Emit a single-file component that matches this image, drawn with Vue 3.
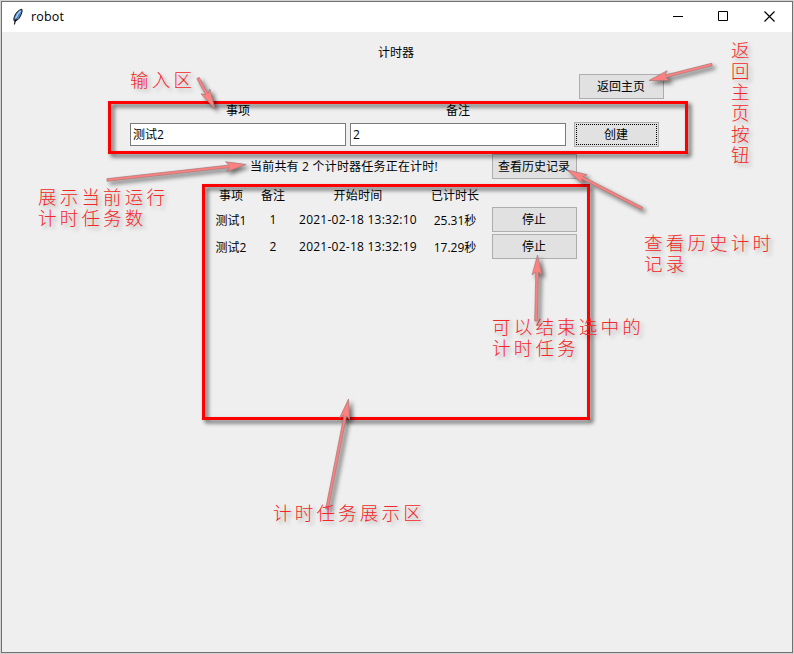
<script setup>
const tasks = [
  { name: '测试1', note: '1', start: '2021-02-18 13:32:10', elapsed: '25.31秒' },
  { name: '测试2', note: '2', start: '2021-02-18 13:32:19', elapsed: '17.29秒' },
]

const arrowShape = (x1, y1, x2, y2) => {
  const len = Math.hypot(x2 - x1, y2 - y1)
  const angle = (Math.atan2(y2 - y1, x2 - x1) * 180) / Math.PI
  return {
    points: `0,0 -20,-5 -17,-1.3 ${-len},-1.3 ${-len},1.3 -17,1.3 -20,5`,
    transform: `translate(${x2} ${y2}) rotate(${angle})`,
  }
}

const arrows = [
  arrowShape(198, 78, 215, 109),
  arrowShape(712, 64.5, 649, 80.5),
  arrowShape(107, 180, 246, 164.5),
  arrowShape(642, 208.5, 567, 170),
  arrowShape(536, 321, 537.5, 255),
  arrowShape(327, 509, 348.5, 399),
]
</script>

<template>
  <div class="screen">
    <div class="window">
      <header class="titlebar">
        <svg class="feather" width="12" height="18" viewBox="0 0 12 18">
          <path d="M9.8 1.2C6.5 2 3.6 5 2.5 8.3C1.8 10.3 1.6 12 2.4 13.2C4.7 13 7 11 8.2 8.6C9.4 6.2 10.6 3.4 9.8 1.2Z" fill="#4c85c5" stroke="#111" stroke-width="1" />
          <path d="M8.6 2.8C6.3 5 4.4 8 3.4 11" fill="none" stroke="#a9d0f5" stroke-width="1.4" />
          <path d="M4.4 10.5C3.4 12.5 2.8 14 2.4 16.5" fill="none" stroke="#111" stroke-width="1.2" />
        </svg>
        <span class="name">robot</span>
        <svg class="control" width="46" height="30" viewBox="0 0 46 30"><path d="M18 14.5H28" /></svg>
        <svg class="control" width="46" height="30" viewBox="0 0 46 30"><path d="M17.5 9.5H26.5V18.5H17.5Z" /></svg>
        <svg class="control" width="46" height="30" viewBox="0 0 46 30"><path d="M17.5 9.5L27.5 19.5M27.5 9.5L17.5 19.5" /></svg>
      </header>

      <main class="body">
        <h1 class="title">计时器</h1>
        <div class="home-row"><button class="btn">返回主页</button></div>

        <div class="form">
          <label class="field">
            <span class="label">事项</span>
            <input class="entry" value="测试2" />
          </label>
          <label class="field">
            <span class="label">备注</span>
            <input class="entry" value="2" />
          </label>
          <button class="btn create"><span class="focus">创建</span></button>
        </div>

        <div class="status-row">
          <span class="status">当前共有 2 个计时器任务正在计时!</span>
          <button class="btn">查看历史记录</button>
        </div>

        <div class="table">
          <div class="row head">
            <span>事项</span><span>备注</span><span>开始时间</span><span>已计时长</span>
          </div>
          <div v-for="t in tasks" :key="t.name" class="row">
            <span>{{ t.name }}</span><span>{{ t.note }}</span><span>{{ t.start }}</span><span>{{ t.elapsed }}</span>
            <button class="btn">停止</button>
          </div>
        </div>
      </main>
    </div>

    <div class="frame input-frame"></div>
    <div class="frame list-frame"></div>
    <svg class="arrows" width="794" height="654" viewBox="0 0 794 654">
      <g v-for="(a, i) in arrows" :key="i" class="arrow">
        <polygon :points="a.points" :transform="a.transform" />
      </g>
    </svg>
    <p class="note note-input">输入区</p>
    <p class="note note-home">返回主页按钮</p>
    <p class="note note-count">展示当前运行<br />计时任务数</p>
    <p class="note note-history">查看历史计时<br />记录</p>
    <p class="note note-stop">可以结束选中的<br />计时任务</p>
    <p class="note note-list">计时任务展示区</p>
  </div>
</template>

<style>
body {
  margin: 0;
  background: #d3d3d3;
}
</style>

<style scoped>
.screen {
  position: relative;
  box-sizing: border-box;
  width: 794px;
  height: 654px;
  padding: 1px;
  overflow: hidden;
  background: #d3d3d3;
  color: #000;
  font-family: "Open Sans", "Noto Sans CJK SC", sans-serif;
  font-size: 12px;
}
.window {
  box-sizing: border-box;
  width: 792px;
  height: 652px;
  border: 1px solid #707070;
  background: #efefef;
}
.titlebar {
  display: flex;
  align-items: center;
  height: 30px;
  background: #fff;
}
.feather {
  margin-left: 10px;
}
.name {
  flex: 1;
  margin-left: 7px;
  padding-bottom: 1px;
  font-size: 12.5px;
  letter-spacing: 0.15px;
}
.control {
  fill: none;
  stroke: #000;
  stroke-width: 1;
}
.control:last-child {
  margin-right: -1px;
  stroke-width: 1.2;
}
.body {
  display: flex;
  flex-direction: column;
}
.title {
  margin: 11px 0 0;
  padding-right: 2px;
  height: 20px;
  line-height: 20px;
  font-size: 12px;
  font-weight: 400;
  text-align: center;
}
.btn {
  box-sizing: border-box;
  width: 85px;
  height: 25px;
  padding: 0 1px 0 0;
  border: 1px solid #adadad;
  background: #e1e1e1;
  color: #000;
  font: inherit;
  line-height: 22px;
  text-align: center;
}
.home-row {
  display: flex;
  justify-content: flex-end;
  margin-top: 11px;
  padding-right: 128px;
}
.form {
  display: flex;
  align-items: flex-end;
  gap: 4px;
  margin-top: 2px;
  padding-left: 128px;
}
.field {
  display: flex;
  flex-direction: column;
}
.label {
  height: 22px;
  line-height: 20px;
  text-align: center;
}
.entry {
  box-sizing: border-box;
  width: 216px;
  height: 23px;
  margin: 0 0 1px;
  padding: 0 2px 1px;
  border: 1px solid #7a7a7a;
  background: #fff;
  color: #000;
  font: inherit;
}
.create {
  margin-left: 4px;
  padding: 1px;
}
.focus {
  display: block;
  box-sizing: border-box;
  height: 21px;
  padding-right: 1px;
  border: 1px dotted #000;
  line-height: 20px;
}
.status-row {
  display: flex;
  align-items: center;
  margin-top: 7px;
  padding-left: 248px;
}
.status {
  width: 242px;
  padding-bottom: 1px;
  letter-spacing: 0.2px;
}
.table {
  display: flex;
  flex-direction: column;
  gap: 2px;
  margin-top: 7px;
  padding-left: 208px;
}
.row {
  display: grid;
  grid-template-columns: 42px 42px 128px 70px 85px;
  align-items: center;
  height: 25px;
  text-align: center;
  white-space: nowrap;
}
.row > span:nth-child(3) {
  letter-spacing: 0.25px;
}
.row > span:nth-child(4) {
  padding-right: 4px;
}
.head {
  height: 19px;
}
.head > span {
  padding-bottom: 2px;
}
.frame {
  position: absolute;
  box-sizing: border-box;
  border: 3px solid #f00;
  filter: drop-shadow(3px 3px 2px rgba(0, 0, 0, 0.65));
}
.input-frame {
  left: 108px;
  top: 101px;
  width: 580px;
  height: 53px;
}
.list-frame {
  left: 202px;
  top: 184px;
  width: 388px;
  height: 236px;
}
.arrows {
  position: absolute;
  left: 0;
  top: 0;
}
.arrow {
  fill: #ff8080;
  stroke: #a87878;
  stroke-width: 0.7;
  filter: drop-shadow(3px 3px 2px rgba(0, 0, 0, 0.55));
}
.note {
  position: absolute;
  margin: 0;
  color: #f52626;
  font-family: "AR PL UKai CN", KaiTi, "Noto Sans CJK SC", sans-serif;
  font-size: 18.5px;
  font-weight: 300;
  line-height: 21px;
  letter-spacing: 3.2px;
  white-space: nowrap;
  text-shadow: 3px 3px 4px rgba(0, 0, 0, 0.28);
}
.note-input {
  left: 130px;
  top: 69px;
}
.note-home {
  left: 731px;
  top: 39px;
  width: 20px;
  letter-spacing: 0;
  white-space: normal;
  word-break: break-all;
}
.note-count {
  left: 38px;
  top: 186px;
}
.note-history {
  left: 644px;
  top: 232px;
}
.note-stop {
  left: 492px;
  top: 316px;
}
.note-list {
  left: 273px;
  top: 502px;
}
</style>
